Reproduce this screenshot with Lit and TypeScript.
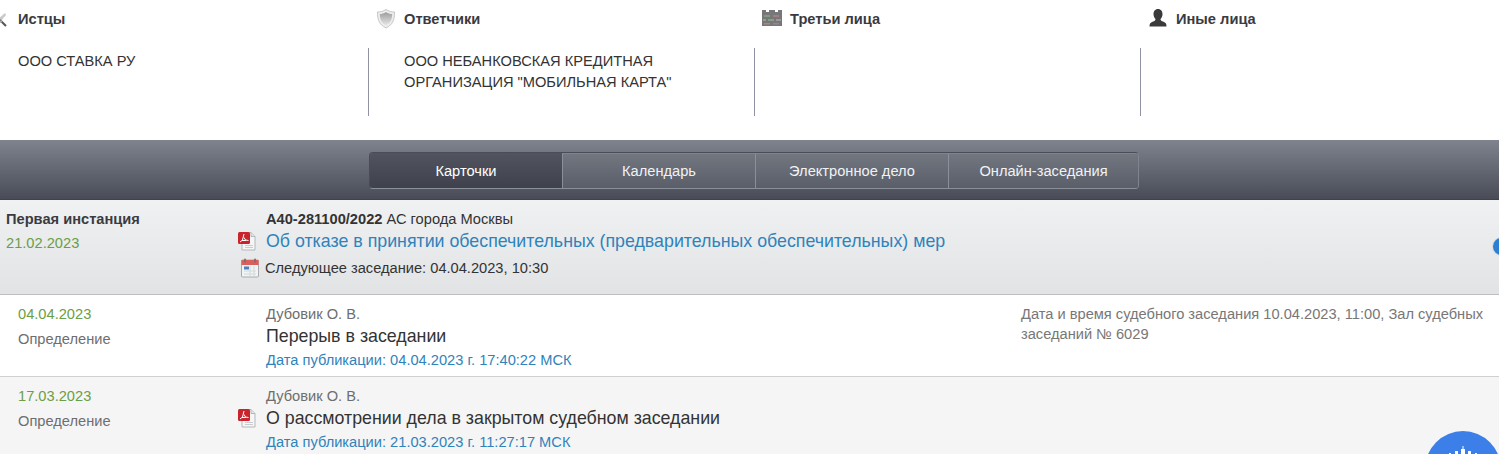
import { html, css, LitElement } from "lit";
import { customElement } from "lit/decorators.js";

const sideIcons = {
  plaintiff: html`<svg width="12" height="18" viewBox="0 0 12 18"><path d="M8 3 L1 9 L4 11 L9 5Z" fill="#c9cacc"/><path d="M3 10 L9 16" stroke="#555" stroke-width="2"/><path d="M0 13 L5 11" stroke="#aaa" stroke-width="2"/></svg>`,
  defendant: html`<svg class="lift-1" width="20" height="21" viewBox="0 0 20 20"><defs><linearGradient id="sh" x1="0" y1="0" x2="0" y2="1"><stop offset="0" stop-color="#9a9c9e"/><stop offset="1" stop-color="#e6e7e8"/></linearGradient></defs><path d="M10 1 C7 3 4 3.500 1.500 3.500 C1.500 11 3 16 10 19.500 C17 16 18.500 11 18.500 3.500 C16 3.500 13 3 10 1Z" fill="#eee" stroke="#c4c5c7"/><path d="M10 3.500 C8 5 5.500 5.500 3.800 5.500 C4 11 5.500 14.500 10 17 C14.500 14.500 16 11 16.200 5.500 C14.500 5.500 12 5 10 3.500Z" fill="url(#sh)"/></svg>`,
  third: html`<svg class="lift-3" width="20" height="17" viewBox="0 0 20 17"><path d="M0 1h4v2h3V1h6v2h3V1h4v16H0Z" fill="#77777a"/><rect x="2" y="6" width="6" height="2" fill="#7f9a80"/><rect x="11" y="6" width="6" height="2" fill="#a08080"/><rect x="6" y="10" width="6" height="2" fill="#83a083"/><rect x="1" y="10" width="3" height="2" fill="#999"/><rect x="14" y="10" width="5" height="2" fill="#999"/><rect x="2" y="14" width="6" height="1.500" fill="#a58a80"/><rect x="11" y="14" width="6" height="1.500" fill="#8a8a90"/></svg>`,
  other: html`<svg class="lift-1" width="20" height="20" viewBox="0 0 20 20"><path d="M10 1 C13 1 14.500 3.500 14.500 6 C14.500 8.500 13.500 10 12.500 11 C12.500 12.500 13.500 13 15.500 13.800 C17.500 14.600 18.500 15.500 18.500 18.500 H1.500 C1.500 15.500 2.500 14.600 4.500 13.800 C6.500 13 7.500 12.500 7.500 11 C6.500 10 5.500 8.500 5.500 6 C5.500 3.500 7 1 10 1Z" fill="#3a3a3c"/></svg>`,
};

const pdfIcon = html`<svg class="file-icon" width="20" height="20" viewBox="0 0 20 20"><path d="M5 1.500h9l4 4v13.500H5Z" fill="#f6f6f6" stroke="#b5b7b9"/><path d="M14 1.500v4h4" fill="#e2e3e5" stroke="#b5b7b9"/><rect x="8" y="14" width="8" height="1" fill="#c9ccd0"/><rect x="8" y="16" width="8" height="1" fill="#c9ccd0"/><rect x="1" y="1" width="12" height="12" rx="1.500" fill="#c8242b"/><path d="M7 3 L5.500 9 L3 11 M7 6.500 L8.500 9 L11.500 9.500 M5 9.500 H9" stroke="#fff" stroke-width="1" fill="none"/></svg>`;

const calIcon = html`<svg class="file-icon" width="20" height="20" viewBox="0 0 20 20"><rect x="1.500" y="2" width="17" height="17" rx="1" fill="#f2f4f4" stroke="#a9aaac"/><rect x="1.500" y="2" width="17" height="5" fill="#d9615b"/><rect x="4" y="0.500" width="2" height="4" rx="1" fill="#8c6a68"/><rect x="14" y="0.500" width="2" height="4" rx="1" fill="#8c6a68"/><rect x="4" y="8.500" width="5" height="3" fill="#4f7fc0"/><path d="M4 13h12M4 16h12M10 8v10M14 8v10" stroke="#cfdadb"/></svg>`;

const sides = [
  { title: "Истцы", icon: sideIcons.plaintiff, text: ["ООО СТАВКА РУ"] },
  {
    title: "Ответчики",
    icon: sideIcons.defendant,
    text: ["ООО НЕБАНКОВСКАЯ КРЕДИТНАЯ", 'ОРГАНИЗАЦИЯ "МОБИЛЬНАЯ КАРТА"'],
  },
  { title: "Третьи лица", icon: sideIcons.third, text: [] },
  { title: "Иные лица", icon: sideIcons.other, text: [] },
];

const tabs = ["Карточки", "Календарь", "Электронное дело", "Онлайн-заседания"];

@customElement("app-root")
export class AppRoot extends LitElement {
  static override styles = css`
    :host {
      display: block;
      position: relative;
      width: 1499px;
      height: 454px;
      overflow: hidden;
      background: #fff;
      font-family: "Liberation Sans", Arial, sans-serif;
      font-size: 14.65px;
      color: #333;
    }
    .sides {
      display: grid;
      grid-template-columns: 368px 386px 386px 359px;
      height: 140px;
    }
    .side-title {
      display: flex;
      align-items: center;
      height: 38px;
      font-weight: bold;
      color: #3a3b42;
    }
    .side-title .ico {
      width: 36px;
      display: flex;
      justify-content: flex-end;
      padding-right: 8px;
      box-sizing: border-box;
      flex: none;
    }
    .side:first-child .ico {
      width: 18px;
      justify-content: flex-start;
      padding: 0;
      margin-left: -3px;
      margin-right: 3px;
    }
    .lift-1 {
      margin-bottom: 2px;
    }
    .lift-3 {
      margin-bottom: 4px;
    }
    .side-body {
      margin-top: 10px;
      height: 68px;
      padding: 3px 0 0 35px;
      box-sizing: border-box;
      border-left: 1px solid #8f92a3;
      line-height: 21px;
    }
    .side:first-child .side-body {
      border-left: 0;
      padding-left: 18px;
    }
    .tabs-bar {
      height: 60px;
      box-sizing: border-box;
      padding-top: 12px;
      background: linear-gradient(#7e838e, #494c57);
      border-bottom: 1px solid #3f424c;
    }
    .tabs {
      display: flex;
      width: 770px;
      height: 37px;
      margin-left: 369px;
      box-sizing: border-box;
      border: 1px solid #4a4d58;
      border-bottom-color: #8b8f9a;
      border-right-color: #7f838e;
      border-radius: 4px;
      overflow: hidden;
    }
    .tab {
      width: 193px;
      flex: none;
      box-sizing: border-box;
      display: flex;
      align-items: center;
      justify-content: center;
      color: #f1f2f4;
      border-left: 1px solid #8b8f9a;
      border-top: 1px solid #7f838e;
      background: linear-gradient(#72767f, #5a5e69);
    }
    .tab:last-child {
      width: 190px;
    }
    .tab.active {
      width: 192px;
      border-left: 0;
      border-top: 0;
      color: #fff;
      background: linear-gradient(#51545e, #3f424c);
    }
    .instance {
      display: grid;
      grid-template-columns: 266px 1fr;
      height: 95px;
      box-sizing: border-box;
      padding-top: 11px;
      background: linear-gradient(#f0f1f3, #e1e3e5);
      border-bottom: 1px solid #bdbec0;
    }
    .instance-side {
      padding-left: 6px;
    }
    .instance-name {
      line-height: 17px;
      font-weight: bold;
      color: #3a3b42;
    }
    .green {
      color: #6c9e46;
      line-height: 17px;
    }
    .instance-side .green {
      margin-top: 7px;
    }
    .case-no {
      line-height: 17px;
    }
    .with-icon {
      position: relative;
    }
    .file-icon {
      position: absolute;
      left: -29px;
      top: 1px;
    }
    .doc-link {
      margin-top: 2px;
      font-size: 17.8px;
      line-height: 22px;
      color: #2f83bb;
    }
    .next {
      margin: 6px 0 0 -1px;
      line-height: 20px;
    }
    .next .file-icon {
      left: -25px;
      top: 0;
    }
    .row {
      display: grid;
      grid-template-columns: 266px 755px 1fr;
      height: 82px;
      box-sizing: border-box;
      padding-top: 9px;
      border-bottom: 1px solid #cfd0d2;
    }
    .row.alt {
      background: #f5f5f5;
      border-bottom: 0;
    }
    .row-side {
      padding: 2px 0 0 18px;
    }
    .row-type {
      margin-top: 8px;
      line-height: 17px;
      color: #6e6e6e;
    }
    .judge {
      line-height: 20px;
      color: #6e6e6e;
    }
    .doc-title {
      margin-top: 1px;
      font-size: 17.8px;
      line-height: 22px;
    }
    .published {
      margin-top: 3px;
      line-height: 20px;
      color: #2f83bb;
    }
    .note {
      line-height: 20px;
      color: #777;
    }
    .dot {
      position: absolute;
      left: 1493px;
      top: 238px;
      width: 17px;
      height: 17px;
      border-radius: 50%;
      background: #2f7fd0;
      box-shadow: 0 0 0 1px #d5dbe2;
    }
    .chat {
      position: absolute;
      left: 1425px;
      top: 431px;
      width: 76px;
      height: 76px;
      border-radius: 50%;
      background: #3c7fe8;
      display: flex;
      justify-content: center;
      padding-top: 15px;
      box-sizing: border-box;
    }
  `;

  private renderRow(
    date: string,
    judge: string,
    title: string,
    published: string,
    note: string,
    pdf: boolean,
    alt: boolean
  ) {
    return html`<div class="row ${alt ? "alt" : ""}">
      <div class="row-side">
        <div class="green">${date}</div>
        <div class="row-type">Определение</div>
      </div>
      <div>
        <div class="judge">${judge}</div>
        <div class="doc-title with-icon">${pdf ? pdfIcon : ""}${title}</div>
        <div class="published">Дата публикации: ${published}</div>
      </div>
      <div class="note">${note}</div>
    </div>`;
  }

  override render() {
    return html`
      <div class="sides">
        ${sides.map(
          (s) => html`<div class="side">
            <div class="side-title"><span class="ico">${s.icon}</span>${s.title}</div>
            <div class="side-body">${s.text.map((t) => html`${t}<br />`)}</div>
          </div>`
        )}
      </div>
      <div class="tabs-bar">
        <div class="tabs">
          ${tabs.map(
            (t, i) => html`<div class="tab ${i === 0 ? "active" : ""}">${t}</div>`
          )}
        </div>
      </div>
      <div class="instance">
        <div class="instance-side">
          <div class="instance-name">Первая инстанция</div>
          <div class="green">21.02.2023</div>
        </div>
        <div>
          <div class="case-no"><b>А40-281100/2022</b> АС города Москвы</div>
          <div class="doc-link with-icon">
            ${pdfIcon}Об отказе в принятии обеспечительных (предварительных
            обеспечительных) мер
          </div>
          <div class="next with-icon">
            ${calIcon}Следующее заседание: 04.04.2023, 10:30
          </div>
        </div>
      </div>
      ${this.renderRow(
        "04.04.2023",
        "Дубовик О. В.",
        "Перерыв в заседании",
        "04.04.2023 г. 17:40:22 МСК",
        "Дата и время судебного заседания 10.04.2023, 11:00, Зал судебных заседаний № 6029",
        false,
        false
      )}
      ${this.renderRow(
        "17.03.2023",
        "Дубовик О. В.",
        "О рассмотрении дела в закрытом судебном заседании",
        "21.03.2023 г. 11:27:17 МСК",
        "",
        true,
        true
      )}
      <div class="dot"></div>
      <div class="chat">
        <svg width="34" height="10" viewBox="0 0 34 10"><path d="M15 3h1.500V0h1v3H19v7h-4ZM9 5h3v5H9ZM22 5h3v5h-3ZM3 7h2v3H3ZM29 7h2v3h-2Z" fill="#fff"/></svg>
      </div>
    `;
  }
}
